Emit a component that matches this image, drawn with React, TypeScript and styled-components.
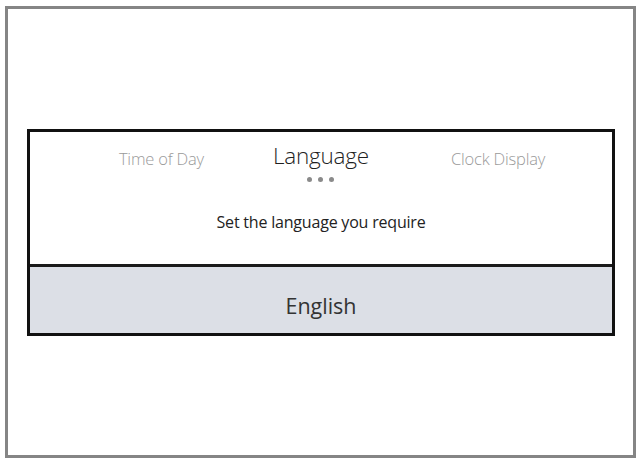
import React from 'react';
import styled, { createGlobalStyle } from 'styled-components';

const GlobalStyle = createGlobalStyle`
  html, body {
    margin: 0;
    padding: 0;
    background: #ffffff;
  }
  body {
    font-family: "Open Sans", "Noto Sans", sans-serif;
  }
`;

const tabs = [
  { label: 'Time of Day', active: false },
  { label: 'Language', active: true },
  { label: 'Clock Display', active: false },
];

export default function App() {
  return (
    <>
      <GlobalStyle />
      <Frame>
        <Panel>
          <TopSection>
            <TabRow>
              {tabs.map((tab) => (
                <Tab key={tab.label} $active={tab.active}>
                  {tab.label}
                  {tab.active && (
                    <Dots>
                      <Dot />
                      <Dot />
                      <Dot />
                    </Dots>
                  )}
                </Tab>
              ))}
            </TabRow>
            <Prompt>Set the language you require</Prompt>
          </TopSection>
          <Option>English</Option>
        </Panel>
      </Frame>
    </>
  );
}

const Frame = styled.div`
  box-sizing: border-box;
  width: 631px;
  height: 452px;
  margin: 6px 0 0 5px;
  border: 3px solid #858585;
  padding: 120px 18px 0 19px;
`;

const Panel = styled.div`
  box-sizing: border-box;
  height: 207px;
  border: 3px solid #111111;
  display: flex;
  flex-direction: column;
`;

const TopSection = styled.div`
  height: 132px;
  border-bottom: 3px solid #1a1a1a;
  display: flex;
  flex-direction: column;
  align-items: center;
`;

const TabRow = styled.div`
  display: flex;
  justify-content: center;
  align-items: flex-start;
  gap: 69px;
  padding-top: 9px;
  padding-left: 22px;
`;

const Tab = styled.div<{ $active: boolean }>`
  display: flex;
  flex-direction: column;
  align-items: center;
  font-size: ${(p) => (p.$active ? '22.5px' : '16.5px')};
  font-weight: 300;
  color: ${(p) => (p.$active ? '#1f1f1f' : '#9a9a9a')};
  line-height: ${(p) => (p.$active ? '30px' : '22px')};
  margin-top: ${(p) => (p.$active ? '0' : '7px')};
  letter-spacing: -0.2px;

  &:last-child {
    margin-left: 13px;
  }
`;

const Dots = styled.div`
  display: flex;
  gap: 6px;
  margin-top: 6px;
`;

const Dot = styled.span`
  width: 5px;
  height: 5px;
  border-radius: 50%;
  background: #8a8a8a;
`;

const Prompt = styled.div`
  margin-top: 29px;
  font-size: 16px;
  font-weight: 400;
  color: #222222;
  letter-spacing: -0.2px;
`;

const Option = styled.div`
  flex: 1;
  background: #dcdfe6;
  display: flex;
  align-items: center;
  justify-content: center;
  font-size: 21.5px;
  font-weight: 400;
  color: #333333;
  padding-top: 10px;
`;
